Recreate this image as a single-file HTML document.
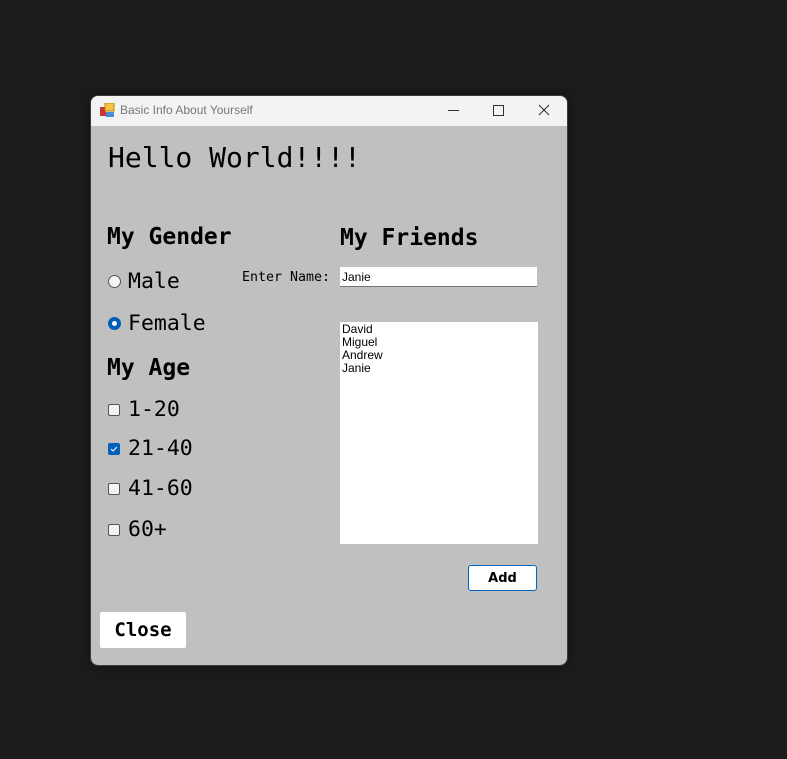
<!DOCTYPE html>
<html><head><style>
body{margin:0;width:787px;height:759px;background:#1c1c1c;position:relative;overflow:hidden;font-family:"DejaVu Sans Mono","Liberation Mono",monospace}
.win{position:absolute;left:91px;top:96px;width:476px;height:569px;background:#c0c0c0;border-radius:7px;overflow:hidden;box-shadow:0 0 12px rgba(0,0,0,.5);outline:1px solid #3a3a3a}
.tb{position:absolute;left:0;top:0;width:476px;height:30px;background:#f3f3f3}
.a{position:absolute;white-space:nowrap;color:#000}
.h{font-weight:bold;font-size:23px}
.o{font-size:21.5px}
.rb{position:absolute;width:11px;height:11px;border:1px solid #555;border-radius:50%;background:#f4f4f4}
.cb{position:absolute;width:10px;height:10px;border:1px solid #555;border-radius:2px;background:#f4f4f4}
.sans{font-family:"Liberation Sans",sans-serif}
</style></head><body>
<div class="win">
 <div class="tb">
  <svg style="position:absolute;left:9px;top:7px" width="15" height="15"><rect x="0" y="4" width="6" height="9" fill="#c33"/><rect x="5" y="0" width="9" height="8" fill="#f5c342" stroke="#b8860b"/><rect x="6" y="9" width="8" height="5" fill="#4a8ad8"/></svg>
  <div class="a sans" style="left:29px;top:7px;font-size:12px;color:#777">Basic Info About Yourself</div>
  <div style="position:absolute;left:357px;top:14px;width:11px;height:1px;background:#333"></div>
  <div style="position:absolute;left:402px;top:9px;width:9px;height:9px;border:1px solid #333"></div>
  <svg style="position:absolute;left:447px;top:8px" width="12" height="12"><path d="M1 1L11 11M11 1L1 11" stroke="#333" stroke-width="1.1"/></svg>
 </div>
 <div class="a" style="left:17px;top:45px;font-size:28px">Hello World!!!!</div>
 <div class="a h" style="left:16px;top:128px">My Gender</div>
 <div class="a h" style="left:249px;top:129px">My Friends</div>
 <div class="rb" style="left:17px;top:179px"></div>
 <div class="a o" style="left:37px;top:173px">Male</div>
 <div class="rb" style="left:17px;top:221px;background:#fff;border:4px solid #005fb8;width:5px;height:5px"></div>
 <div class="a o" style="left:37px;top:215px">Female</div>
 <div class="a h" style="left:16px;top:259px">My Age</div>
 <div class="cb" style="left:17px;top:308px"></div><div class="a o" style="left:37px;top:301px">1-20</div>
 <div class="cb" style="left:17px;top:347px;background:#005fb8;border-color:#005fb8"></div>
 <svg style="position:absolute;left:19px;top:350px" width="8" height="6"><path d="M1 3L3 5L7 1" stroke="#fff" fill="none"/></svg>
 <div class="a o" style="left:37px;top:340px">21-40</div>
 <div class="cb" style="left:17px;top:387px"></div><div class="a o" style="left:37px;top:380px">41-60</div>
 <div class="cb" style="left:17px;top:428px"></div><div class="a o" style="left:37px;top:421px">60+</div>
 <div class="a" style="left:151px;top:174px;font-size:13.3px">Enter Name:</div>
 <div style="position:absolute;left:249px;top:171px;width:197px;height:19px;background:#fff;border-bottom:1px solid #777"></div>
 <div class="a sans" style="left:251px;top:174px;font-size:12px">Janie</div>
 <div style="position:absolute;left:249px;top:226px;width:198px;height:222px;background:#fff"></div>
 <div class="a sans" style="left:251px;top:227px;font-size:12px;line-height:13px">David<br>Miguel<br>Andrew<br>Janie</div>
 <div style="position:absolute;left:377px;top:469px;width:67px;height:24px;background:#fff;border:1px solid #0067c0;border-radius:3px;text-align:center;font:bold 13px/26px 'DejaVu Sans',sans-serif">Add</div>
 <div style="position:absolute;left:9px;top:516px;width:86px;height:36px;background:#fff;border-radius:2px;text-align:center;line-height:37px;font-weight:bold;font-size:19px">Close</div>
</div>
</body></html>
